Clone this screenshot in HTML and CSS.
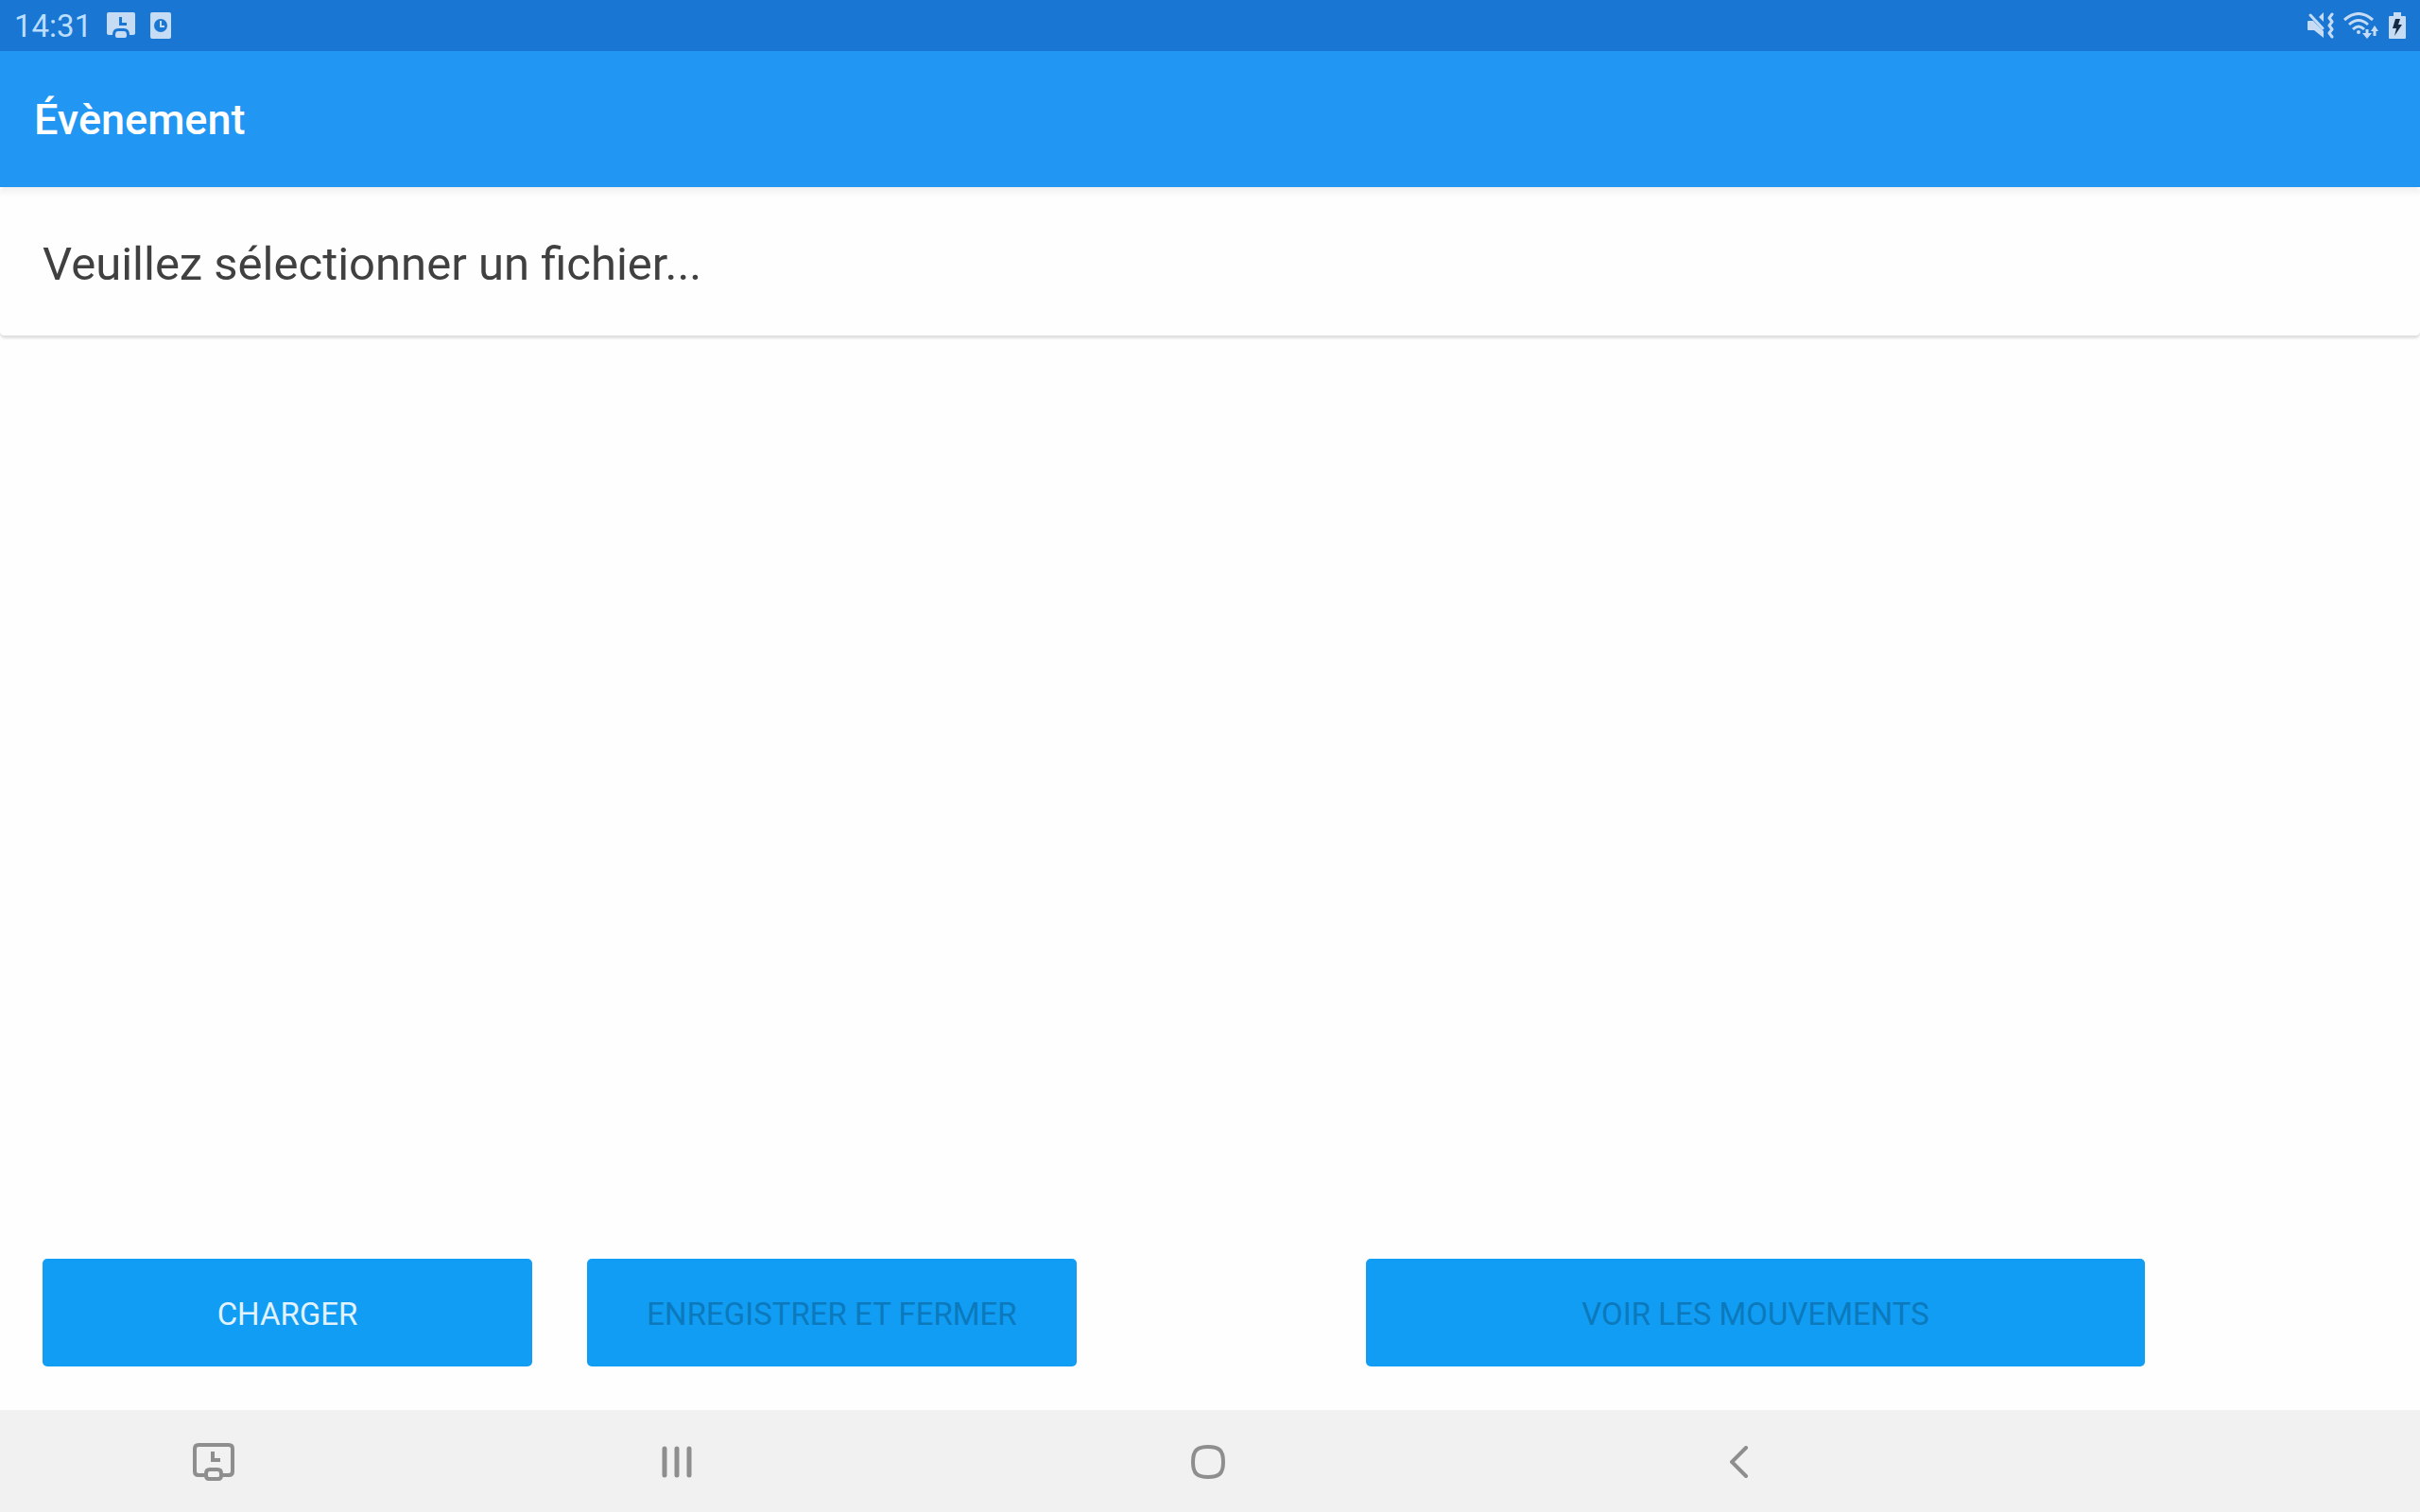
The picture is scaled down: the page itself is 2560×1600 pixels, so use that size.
FILE: index.html
```
<!DOCTYPE html>
<html lang="fr">
<head>
    <meta charset="UTF-8">
    <meta name="viewport" content="width=device-width, initial-scale=1.0">
    <title>Évènement</title>
    <link rel="stylesheet" href="styles.css">
</head>
<body>
    <div class="status-bar">
        <div class="status-left">
            <time class="clock">14:31</time>
            <svg width="30" height="28" viewBox="0 0 30 28">
                <path fill="currentColor" fill-rule="evenodd" d="M2 0H28Q30 0 30 2V22Q30 24 28 24H24Q24 17 18 17H12Q6 17 6 24H2Q0 24 0 22V2Q0 0 2 0ZM13 5V14H21V11H16V5Z"/>
                <path fill="currentColor" d="M12 20H18Q21 20 21 24V25Q21 27 19 27H11Q9 27 9 25V24Q9 20 12 20Z"/>
            </svg>
            <svg width="22" height="28" viewBox="0 0 22 28">
                <path fill="currentColor" fill-rule="evenodd" d="M2 0H20Q22 0 22 2V26Q22 28 20 28H2Q0 28 0 26V2Q0 0 2 0ZM11 7A7 7 0 1 0 11 21A7 7 0 1 0 11 7Z"/>
                <path fill="none" stroke="currentColor" stroke-width="2" d="M11 9V15H15"/>
            </svg>
        </div>
        <div class="status-right">
            <svg width="28" height="28" viewBox="0 0 28 28">
                <path fill="currentColor" d="M0 10Q0 9 1 9H6L17 20V27L7 19H1Q0 19 0 18ZM12 5L17 0V10Z"/>
                <path fill="none" stroke="currentColor" stroke-width="3" stroke-linecap="round" d="M3 3L16 17"/>
                <path fill="none" stroke="currentColor" stroke-width="3" stroke-linecap="round" stroke-linejoin="round" d="M26 2L23 6L26 10L23 14L26 18L23 22L26 26"/>
            </svg>
            <svg width="38" height="28" viewBox="0 0 38 28">
                <g fill="none" stroke="currentColor" stroke-width="3">
                    <path d="M1 8Q16 -5 31 8"/>
                    <path d="M6 13Q16 4 26 13"/>
                    <path d="M10 18Q16 12 22 18"/>
                    <path d="M25 18V25M33 25V18"/>
                </g>
                <circle fill="currentColor" cx="16" cy="21" r="2"/>
                <path fill="currentColor" d="M20 22H30L25 28ZM29 20L33 14L37 20Z"/>
            </svg>
            <svg width="18" height="28" viewBox="0 0 18 28">
                <path fill="currentColor" d="M5 0H13V4H17Q18 4 18 5V27Q18 28 17 28H1Q0 28 0 27V5Q0 4 1 4H5Z"/>
                <path fill="#152b45" d="M7 7H12L10 13H14L6 25L8 17H4Z"/>
            </svg>
        </div>
    </div>
    <header>
        <h1>Évènement</h1>
    </header>
    <main>
        <section class="card">
            <p>Veuillez sélectionner un fichier...</p>
        </section>
        <div class="actions">
            <button type="button" class="btn load">Charger</button>
            <button type="button" class="btn save" disabled>Enregistrer et fermer</button>
            <button type="button" class="btn moves" disabled>Voir les mouvements</button>
        </div>
    </main>
    <nav class="nav-bar">
        <button type="button" aria-label="Capture">
            <svg width="46" height="40" viewBox="0 0 46 40">
                <g fill="none" stroke="currentColor" stroke-width="4">
                    <path d="M14 34H7Q3 34 3 30V6Q3 2 7 2H39Q43 2 43 6V30Q43 34 39 34H32"/>
                    <path d="M19 28H27Q31 28 31 32V34Q31 38 28 38H18Q15 38 15 34V32Q15 28 19 28Z"/>
                </g>
                <path fill="currentColor" d="M20 9H24V16H30V20H20Z"/>
            </svg>
        </button>
        <button type="button" aria-label="Applications récentes">
            <svg width="32" height="34" viewBox="0 0 32 34">
                <path fill="none" stroke="currentColor" stroke-width="5" stroke-linecap="round" d="M3 3V31M16 3V31M29 3V31"/>
            </svg>
        </button>
        <button type="button" aria-label="Accueil">
            <svg width="36" height="36" viewBox="0 0 36 36">
                <path fill="none" stroke="currentColor" stroke-width="4" d="M18 2C30 2 34 6 34 18S30 34 18 34S2 30 2 18S6 2 18 2Z"/>
            </svg>
        </button>
        <button type="button" aria-label="Retour">
            <svg width="20" height="34" viewBox="0 0 20 34">
                <path fill="none" stroke="currentColor" stroke-width="4" stroke-linecap="round" d="M17 2L2 17L17 32"/>
            </svg>
        </button>
    </nav>
</body>
</html>
```

FILE: styles.css
```
* {
    box-sizing: border-box;
}
body {
    display: flex;
    flex-direction: column;
    min-height: 100vh;
    margin: 0;
    font-family: Roboto, sans-serif;
    background-color: #fefefe;
}
svg {
    display: block;
}
.status-bar {
    display: flex;
    justify-content: space-between;
    align-items: center;
    height: 54px;
    padding: 0 15px;
    background-color: #1976d2;
    color: #c5dcf4;
}
.status-left,
.status-right {
    display: flex;
    align-items: center;
}
.status-left {
    gap: 16px;
}
.status-right {
    gap: 10px;
}
.clock {
    padding-top: 2px;
    font-size: 33px;
    line-height: 52px;
    color: #badefb;
}
header {
    padding: 46px 36px 44px;
    background-color: #2196f3;
    color: white;
}
h1 {
    margin: 0;
    font-size: 45px;
    line-height: 54px;
    font-weight: 500;
}
main {
    display: flex;
    flex-direction: column;
    flex: 1;
    justify-content: space-between;
}
.card {
    padding: 52px 45px 46px;
    background: linear-gradient(#f0f0f0, #fefefe 10px);
    border-radius: 5px;
    box-shadow: 0 3px 3px rgba(0, 0, 0, 0.13);
}
.card p {
    margin: 0;
    font-size: 49px;
    line-height: 59px;
    color: #404040;
}
.actions {
    display: grid;
    grid-template-columns: 518fr 58px 518fr 306fr 824fr 246fr;
    padding: 0 45px 46px;
}
.btn {
    height: 114px;
    padding: 2px 0 0;
    border: none;
    border-radius: 5px;
    background-color: #119df3;
    color: #e2f3fe;
    font-family: inherit;
    font-size: 33px;
    text-transform: uppercase;
}
.btn:disabled {
    color: #0b79bb;
}
.save {
    grid-column: 3;
}
.moves {
    grid-column: 5;
}
.nav-bar {
    display: grid;
    grid-template-columns: 419fr 562fr 562fr 562fr 423fr;
    height: 108px;
    padding: 2px 16px 0;
    background-color: #f1f1f1;
}
.nav-bar button {
    display: flex;
    justify-content: center;
    align-items: center;
    padding: 0;
    border: none;
    background: none;
    color: #8e8e8e;
}
```
